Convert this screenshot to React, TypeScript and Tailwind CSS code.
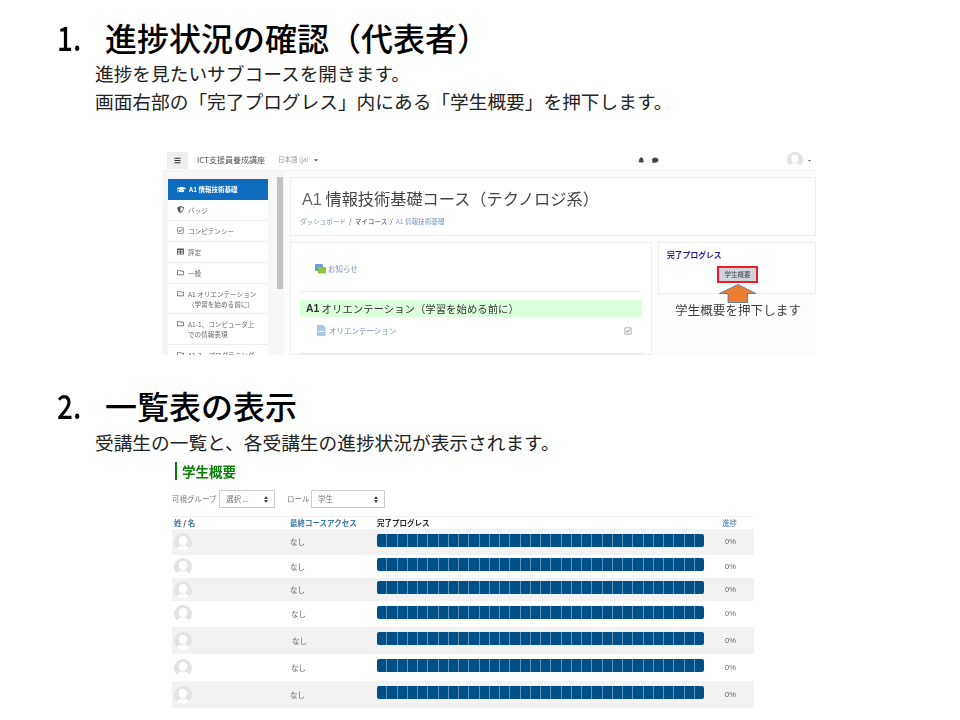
import React from "react";
import { FaBars, FaBell, FaComment, FaGraduationCap, FaShieldAlt, FaRegCheckSquare, FaTable, FaRegFolder, FaCaretDown } from "react-icons/fa";

const cjk = "font-['Noto_Sans_CJK_JP','Noto_Sans',sans-serif] [text-spacing-trim:space-all]";

function Heading({ n, children }: { n: string; children: React.ReactNode }) {
  return (
    <div className="flex h-[40px] items-center pl-[57px] text-[32px] leading-[40px] font-medium text-black">
      <span className="w-[48px]"><span className="inline-block origin-left scale-x-[0.82] text-[34px]">{n}</span></span>
      <span>{children}</span>
    </div>
  );
}

function Avatar({ size = 18 }: { size?: number }) {
  return (
    <svg width={size} height={size} viewBox="0 0 18 18" className="shrink-0">
      <defs>
        <clipPath id="av"><circle cx="9" cy="9" r="9" /></clipPath>
      </defs>
      <circle cx="9" cy="9" r="9" fill="#e3e3e3" />
      <g clipPath="url(#av)" fill="#fff">
        <ellipse cx="9" cy="7.5" rx="4.2" ry="4.8" />
        <ellipse cx="9" cy="17" rx="6.5" ry="4.5" />
      </g>
    </svg>
  );
}

const side = [
  { h: "h-[21px]", icon: <FaShieldAlt />, t: ["バッジ"] },
  { h: "h-[21px]", icon: <FaRegCheckSquare />, t: ["コンピテンシー"] },
  { h: "h-[21px]", icon: <FaTable />, t: ["評定"] },
  { h: "h-[21px]", icon: <FaRegFolder />, t: ["一般"] },
  { h: "h-[30px]", icon: <FaRegFolder />, t: ["A1 オリエンテーション", "（学習を始める前に）"] },
  { h: "h-[31px]", icon: <FaRegFolder />, t: ["A1-1、コンピュータ上", "での情報表現"] },
  { h: "h-[31px]", icon: <FaRegFolder />, t: ["A1-2、プログラミング"] },
];

function Course() {
  return (
    <div className={`relative ml-[162px] mt-[35px] flex h-[205px] w-[654px] flex-col overflow-hidden bg-white blur-[0.35px] ${cjk}`}>
      <div className="flex h-[21px] shrink-0 items-center border-b border-[#f2f2f2] pl-[5px]">
        <div className="flex h-[17px] w-[21px] items-center justify-center bg-[#eceeef] text-[7px] text-[#333]"><FaBars /></div>
        <div className="ml-[9px] w-[81px] text-[8px] text-[#555]">ICT支援員養成講座</div>
        <div className="flex items-center gap-[4px] text-[6.5px] text-[#999]">日本語 (ja)<FaCaretDown className="text-[6px] text-[#555]" /></div>
        <div className="ml-[319px] flex items-center gap-[8px] text-[6.5px] text-[#444]"><FaBell /><FaComment /></div>
        <div className="ml-[128px] flex items-center gap-[4px]"><Avatar size={16} /><FaCaretDown className="text-[5px] text-[#666]" /></div>
      </div>
      <div className="flex min-h-0 flex-1">
        <div className="flex w-[122px] shrink-0 overflow-hidden bg-[#f7f7f7] pl-[6px] pt-[8px]">
          <div className="w-[100px] shrink-0">
            <div className="flex h-[21px] items-center gap-[3px] bg-[#0f6cbf] pl-[9px] text-[6.5px] font-bold text-white">
              <FaGraduationCap className="text-[9px]" />A1 情報技術基礎
            </div>
            {side.map((s, i) => (
              <div key={i} className={`${s.h} border-b border-[#eeeeee] bg-white pl-[9px] pt-[5px] text-[6.6px] leading-[10px] text-[#666]`}>
                <div className="flex items-start gap-[4px]">
                  <span className="mt-[1px] text-[7px] text-[#555]">{s.icon}</span>
                  <span className="whitespace-nowrap text-left">
                    {s.t.map((x, j) => (<div key={j}>{x}</div>))}
                  </span>
                </div>
              </div>
            ))}
          </div>
          <div className="ml-[9px] w-[6px] shrink-0">
            <div className="mt-[-2px] h-[112px] w-[6px] bg-[#c1c1c1]" />
          </div>
        </div>
        <div className="min-w-0 flex-1 bg-[#fdfdfd] pl-[6px] pt-[6px]">
          <div className="h-[59px] border border-[#eeeeee] bg-white pl-[11px] pt-[7px]">
            <div className="text-[16.2px] leading-[26px] text-[#444]"><span className="font-['Liberation_Sans',sans-serif] text-[#666]">A1</span> 情報技術基礎コース（テクノロジ系）</div>
            <div className="-ml-[2px] mt-[4px] text-[6.6px] leading-[10px] text-[#7d97b8]">ダッシュボード<span className="text-[#444]">&nbsp;&nbsp;/&nbsp;&nbsp;マイコース&nbsp;&nbsp;/&nbsp;&nbsp;</span>A1 情報技術基礎</div>
          </div>
          <div className="mt-[6px] flex gap-[6px]">
            <div className="h-[113px] w-[362px] border border-[#eeeeee] bg-white px-[9px]">
              <div className="flex h-[49px] items-center border-b border-[#eeeeee] pl-[15px] pt-[4px] text-[7.5px] text-[#7b93ad]">
                <svg width="11" height="11" viewBox="0 0 11 11" className="mr-[2px]"><rect x="0" y="0" width="8" height="7" rx="1" fill="#6f9fd8" /><rect x="3" y="3" width="8" height="6.5" rx="1" fill="#8cc63f" /></svg>
                お知らせ
              </div>
              <div className="mt-[8px] flex h-[17px] items-center bg-[#dcffdc] pl-[6px] text-[10.4px] text-[#333]"><b className="font-['Liberation_Sans',sans-serif]">A1</b>&nbsp;オリエンテーション（学習を始める前に）</div>
              <div className="flex h-[37px] items-center border-b border-[#e6e6e6] pb-[9px] pl-[16px] pr-[10px] text-[7.5px] text-[#7b93ad]">
                <svg width="10" height="11" viewBox="0 0 10 11" className="mr-[3px]"><path d="M1 0h6l2.5 2.5V11H1z" fill="#a9c8ea" /><rect x="2.5" y="6" width="5.5" height="1" fill="#fff" /></svg>
                オリエンテーション
                <FaRegCheckSquare className="ml-auto text-[8px] text-[#999]" />
              </div>
            </div>
            <div className="w-[158px]">
              <div className="h-[52px] border border-[#eeeeee] bg-white pl-[8px] pt-[6px]">
                <div className="text-[7.8px] leading-[11px] font-bold text-[#1b1b8f]">完了プログレス</div>
                <div className="ml-[50px] mt-[6px] flex h-[17px] w-[41px] items-center justify-center border-[2px] border-[#ee1c25] bg-[#ced4da] text-[6.5px] text-[#444]">学生概要</div>
              </div>
              <div className="mt-[7px] pl-[17px] text-[12.5px] leading-[18px] tracking-[0.1px] text-[#404040]">学生概要を押下します</div>
            </div>
          </div>
        </div>
      </div>
      <svg width="40" height="20" viewBox="0 0 40 20" className="absolute left-[556px] top-[134px]">
        <path d="M20 0.5 L38 9.5 H29.5 V18.5 H10 V9.5 H1.5 Z" fill="#ed7d31" stroke="#4472a8" strokeWidth="0.8" />
      </svg>
    </div>
  );
}

const rows = [
  { c: "h-[26px] bg-[#f2f2f2]", n: "pl-0" },
  { c: "h-[23px] bg-white", n: "pl-0" },
  { c: "h-[23px] bg-[#f2f2f2]", n: "pl-0" },
  { c: "h-[26px] bg-white", n: "pl-[1px]" },
  { c: "h-[27px] bg-[#f2f2f2]", n: "pl-[2px]" },
  { c: "h-[27px] bg-white", n: "pl-[1px]" },
  { c: "h-[27px] bg-[#f2f2f2]", n: "pl-0" },
];

const cells = Array.from({ length: 32 });

function Sel({ w, t }: { w: string; t: string }) {
  return (
    <div className={`${w} flex h-[18px] shrink-0 items-center justify-between border border-[#cccccc] bg-white pl-[6px] pr-[6px] text-[7.5px] text-[#777]`}>
      <span>{t}</span>
      <svg width="4" height="7" viewBox="0 0 4 7"><path d="M2 0L4 3H0zM2 7L0 4h4z" fill="#444" /></svg>
    </div>
  );
}

function Report() {
  return (
    <div className={`ml-[172px] w-[582px] blur-[0.3px] ${cjk}`}>
      <div className="ml-[3px] mt-[6px] flex h-[18px] items-center border-l-[2px] border-[#008000] pl-[5px] text-[13.5px] font-bold text-[#0a7d0a]">学生概要</div>
      <div className="mt-[10px] flex h-[18px] items-center text-[7.5px] text-[#777]">
        <span className="w-[47px] whitespace-nowrap">可視グループ</span>
        <Sel w="w-[56px]" t="選択 ..." />
        <span className="ml-[12px] w-[24px] whitespace-nowrap">ロール</span>
        <Sel w="w-[74px]" t="学生" />
      </div>
      <div className="mt-[8px] grid h-[13px] grid-cols-[118px_87px_327px_50px] items-center border-t border-[#f2f2f2] pb-[2px] text-[7.5px] font-bold text-[#3e76a8]">
        <span className="pl-[2px]">姓 <span className="text-[#333]">/</span> 名</span>
        <span>最終コースアクセス</span>
        <span className="text-[#222]">完了プログレス</span>
        <span className="pl-[18px] font-normal">進捗</span>
      </div>
      {rows.map((r, i) => (
        <div key={i} className={`grid grid-cols-[118px_87px_327px_50px] items-center text-[7.5px] text-[#666] ${r.c}`}>
          <span className="pl-[2px]"><Avatar /></span>
          <span className={r.n}>なし</span>
          <div className="mt-[-4px] flex h-[13px] overflow-hidden rounded-[2px] bg-[#004f87]">
            {cells.map((_, j) => (
              <div key={j} className="flex-1 border-r border-[#5f94ba] last:border-r-0" />
            ))}
          </div>
          <span className="pl-[21px] font-['Liberation_Sans',sans-serif]">0%</span>
        </div>
      ))}
    </div>
  );
}

export default function App() {
  return (
    <div className={`h-[720px] w-[960px] overflow-hidden bg-white pt-[17px] ${cjk}`}>
      <Heading n="1.">進捗状況の確認（代表者）</Heading>
      <div className="mt-[2px] pl-[95px] text-[18.7px] leading-[28px] text-[#222]">
        <div>進捗を見たいサブコースを開きます。</div>
        <div>画面右部の「完了プログレス」内にある「学生概要」を押下します。</div>
      </div>
      <Course />
      <div className="mt-[30px]"><Heading n="2.">一覧表の表示</Heading></div>
      <div className="mt-[3px] pl-[95px] text-[18.7px] leading-[28px] text-[#222]">受講生の一覧と、各受講生の進捗状況が表示されます。</div>
      <Report />
    </div>
  );
}
